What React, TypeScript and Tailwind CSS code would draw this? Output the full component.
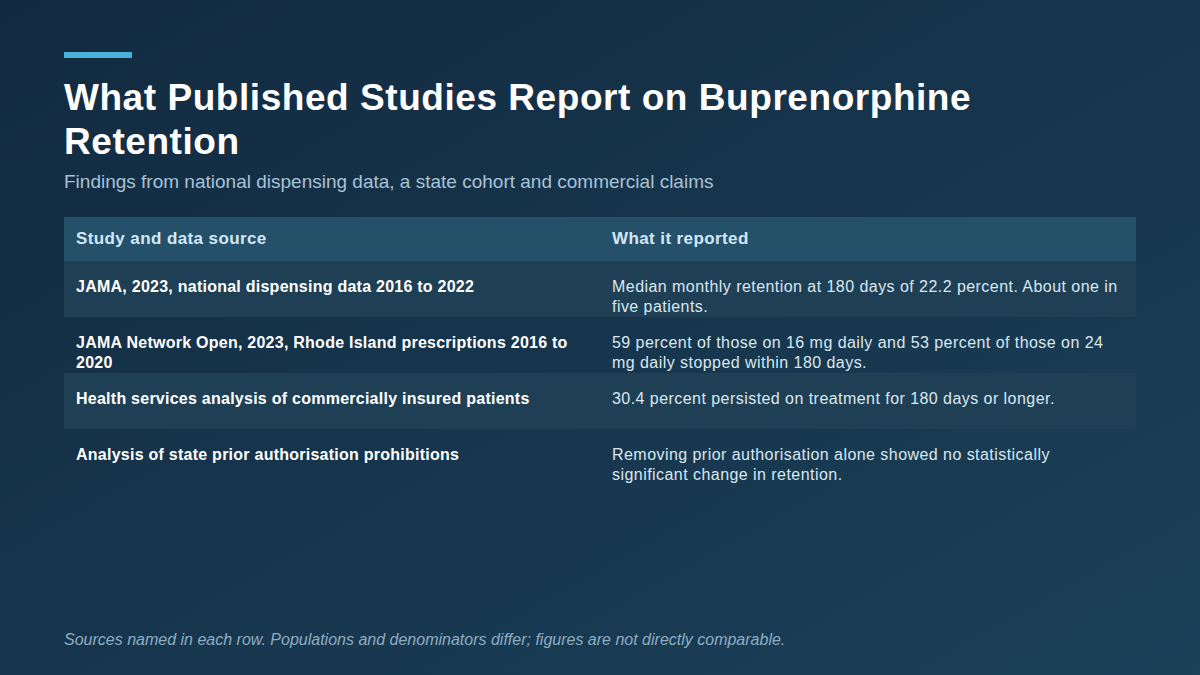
import React from 'react';

const rows = [
  {
    source: 'JAMA, 2023, national dispensing data 2016 to 2022',
    finding: 'Median monthly retention at 180 days of 22.2 percent. About one in five patients.',
  },
  {
    source: 'JAMA Network Open, 2023, Rhode Island prescriptions 2016 to 2020',
    finding: '59 percent of those on 16 mg daily and 53 percent of those on 24 mg daily stopped within 180 days.',
  },
  {
    source: 'Health services analysis of commercially insured patients',
    finding: '30.4 percent persisted on treatment for 180 days or longer.',
  },
  {
    source: 'Analysis of state prior authorisation prohibitions',
    finding: 'Removing prior authorisation alone showed no statistically significant change in retention.',
  },
];

const App: React.FC = () => {
  return (
    <div
      className="w-[1200px] h-[675px] overflow-hidden flex flex-col px-16 pt-[52px] pb-[25px] bg-gradient-to-br from-[#122a40] to-[#1a4159]"
      style={{ fontFamily: '"Liberation Sans", Arial, Helvetica, sans-serif' }}
    >
      <div className="w-[68px] h-[6px] bg-[#4ab0d9]" />
      <h1 className="mt-[18px] text-[37px] leading-[44px] font-bold text-white tracking-[0.55px]">
        What Published Studies Report on Buprenorphine
        <br />
        Retention
      </h1>
      <p className="mt-[6px] text-[19px] leading-[24px] text-[#a7c2d6]">
        Findings from national dispensing data, a state cohort and commercial claims
      </p>

      <div className="mt-[23px] w-full">
        <div className="grid grid-cols-2 h-[44px] items-center bg-[#24506a]">
          <div className="px-3 text-[17px] font-bold text-[#d3e8f5] tracking-[0.4px]">Study and data source</div>
          <div className="px-3 text-[17px] font-bold text-[#d3e8f5] tracking-[0.4px]">What it reported</div>
        </div>
        {rows.map((r, i) => (
          <div
            key={i}
            className={`grid grid-cols-2 h-[56px] ${i % 2 === 0 ? 'bg-[#1f3f55]' : 'bg-transparent'}`}
          >
            <div className="px-3 pt-4 text-[16px] leading-[20px] font-bold text-white tracking-[0.25px]">{r.source}</div>
            <div className="px-3 pt-4 text-[16px] leading-[20px] text-[#dbe7ef] tracking-[0.45px]">{r.finding}</div>
          </div>
        ))}
      </div>

      <p className="mt-auto text-[16px] leading-[20px] italic text-[#8eadc3]">
        Sources named in each row. Populations and denominators differ; figures are not directly comparable.
      </p>
    </div>
  );
};

export default App;
